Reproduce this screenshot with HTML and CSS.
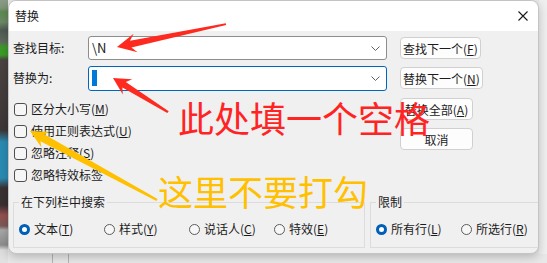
FILE: index.html
```html
<!DOCTYPE html>
<html lang="zh-CN">
<head>
    <meta charset="UTF-8">
    <meta name="viewport" content="width=device-width, initial-scale=1.0">
    <title>替换</title>
    <link rel="stylesheet" href="styles.css">
</head>
<body>
    <div class="desktop">
        <div class="wallpaper"></div>
        <div class="dialog">
            <div class="titlebar">
                <span class="title">替换</span>
                <svg class="close" width="10" height="10" viewBox="0 0 10 10">
                    <path d="M0.5 0.5 L9.5 9.5 M9.5 0.5 L0.5 9.5" stroke="#1a1a1a" stroke-width="1.1" fill="none"/>
                </svg>
            </div>
            <div class="dialog-body">
                <div class="top">
                    <div class="fields">
                        <div class="field-row">
                            <label class="field-label">查找目标:</label>
                            <div class="combo">
                                <span class="combo-text">\N</span>
                                <svg class="chevron" width="9" height="5" viewBox="0 0 9 5"><path d="M0.5 0.5 L4.5 4.5 L8.5 0.5" stroke="#606060" fill="none"/></svg>
                            </div>
                        </div>
                        <div class="field-row">
                            <label class="field-label">替换为:</label>
                            <div class="combo combo-focus">
                                <span class="selection"></span>
                                <svg class="chevron" width="9" height="5" viewBox="0 0 9 5"><path d="M0.5 0.5 L4.5 4.5 L8.5 0.5" stroke="#606060" fill="none"/></svg>
                            </div>
                        </div>
                        <ul class="options">
                            <li><span class="check"></span>区分大小写(<u>M</u>)</li>
                            <li><span class="check"></span>使用正则表达式(<u>U</u>)</li>
                            <li><span class="check"></span>忽略注释(<u>S</u>)</li>
                            <li><span class="check"></span>忽略特效标签</li>
                        </ul>
                    </div>
                    <div class="actions">
                        <button class="btn">查找下一个(<u>F</u>)</button>
                        <button class="btn">替换下一个(<u>N</u>)</button>
                        <button class="btn btn-wide">替换全部(<u>A</u>)</button>
                        <button class="btn btn-wide">取消</button>
                    </div>
                </div>
                <div class="groups">
                    <fieldset class="group group-columns">
                        <legend>在下列栏中搜索</legend>
                        <div class="radio-row">
                            <span class="radio-item"><span class="radio on"></span>文本(<u>T</u>)</span>
                            <span class="radio-item"><span class="radio"></span>样式(<u>Y</u>)</span>
                            <span class="radio-item"><span class="radio"></span>说话人(<u>C</u>)</span>
                            <span class="radio-item"><span class="radio"></span>特效(<u>E</u>)</span>
                        </div>
                    </fieldset>
                    <fieldset class="group group-limit">
                        <legend>限制</legend>
                        <div class="radio-row">
                            <span class="radio-item"><span class="radio on"></span>所有行(<u>L</u>)</span>
                            <span class="radio-item"><span class="radio"></span>所选行(<u>R</u>)</span>
                        </div>
                    </fieldset>
                </div>
            </div>
        </div>
        <div class="side"></div>
        <div class="taskrow"></div>

        <!-- annotations drawn over the screenshot -->
        <svg class="marks" width="547" height="263" viewBox="0 0 547 263">
            <polygon fill="#ff2a1f" points="225.8,23.2 130.0,40.7 133.6,33.7 117,47 137.6,52.3 131.4,47.5 226.2,25"/>
            <polygon fill="#ff2a1f" points="168.7,111.2 125.8,82.1 132.2,79.3 113,78 122.8,94.6 122.4,87.5 167.3,113"/>
            <polygon fill="#ffc000" points="157.6,199 44.2,134.2 50.1,131.7 30,131 41.5,147.5 40.4,141.2 156.4,201"/>
        </svg>
        <div class="note note-red">此处填一个空格</div>
        <div class="note note-yellow">这里不要打勾</div>
    </div>
</body>
</html>
```

FILE: styles.css
```css
* {
    padding: 0;
    margin: 0;
    box-sizing: border-box;
}
ul {
    list-style: none;
}
body {
    width: 547px;
    height: 263px;
    overflow: hidden;
    font-family: "Noto Sans CJK SC", "Microsoft YaHei", sans-serif;
    font-size: 12px;
    line-height: 16px;
    color: #1b1b1b;
    background: #e9e9e9;
}
u {
    text-decoration: underline;
    text-underline-offset: 1px;
}
.desktop {
    position: relative;
    display: grid;
    grid-template-columns: 8px 531px 8px;
    grid-template-rows: 254px 9px;
    width: 547px;
    height: 263px;
}
.wallpaper {
    grid-row: 1 / 3;
    grid-column: 1;
    background: linear-gradient(to bottom,
        #8c9a88 0, #7f9479 8px, #5d8a50 12px, #6c8a66 22px, #4f5a52 30px,
        #5e6a5e 42px, #3c9a28 47px, #3c9a28 55px, #4a4342 60px,
        #3d3636 130px, #2b8bb3 142px, #2b8bb3 178px, #3a3131 188px,
        #3a3131 205px, #93504e 215px, #7a5a58 226px, #a8a8a8 230px,
        #8d8d8d 245px, #dcdcdc 250px, #e2e2e2 263px);
}
.dialog {
    grid-row: 1;
    grid-column: 2;
    display: flex;
    flex-direction: column;
    border: 1px solid #c4c4c4;
    border-radius: 8px;
    overflow: hidden;
    background: #f0f0f0;
    box-shadow: 0 3px 10px rgba(0, 0, 0, 0.22);
    z-index: 1;
}
.side {
    grid-row: 1;
    grid-column: 3;
    background: #efefef;
}
.taskrow {
    grid-row: 2;
    grid-column: 2 / 4;
    background:
        linear-gradient(to right, transparent 44px, #b5b5b5 44px, #b5b5b5 45px, transparent 45px, transparent 60px, #b5b5b5 60px, #b5b5b5 61px, transparent 61px),
        #e8e8e8;
}
.titlebar {
    height: 30px;
    display: flex;
    align-items: center;
    justify-content: space-between;
    padding: 0 10px 0 6px;
    background: #ffffff;
}
.title {
    font-size: 12px;
    color: #1a1a1a;
}
.dialog-body {
    flex: 1;
    display: flex;
    flex-direction: column;
    padding: 5px 4px 4px 4px;
}
.top {
    display: flex;
}
.fields {
    width: 374px;
}
.field-row {
    display: flex;
    align-items: center;
    height: 24px;
    margin-bottom: 6px;
}
.field-label {
    width: 75px;
}
.combo {
    flex: 1;
    height: 24px;
    display: flex;
    align-items: center;
    justify-content: space-between;
    padding: 0 6px 0 3px;
    background: #ffffff;
    border: 1px solid #8d8d8d;
    border-radius: 3px;
}
.combo-focus {
    border-color: #0067c0;
    height: 25px;
}
.combo-text {
    font-size: 13px;
}
.selection {
    width: 5px;
    height: 16px;
    background: #0078d7;
}
.options {
    margin-top: 8px;
}
.options li {
    display: flex;
    align-items: center;
    height: 22px;
    padding-left: 1px;
}
.check {
    width: 13px;
    height: 13px;
    margin-right: 4px;
    border: 1px solid #4f4f4f;
    border-radius: 3px;
    background: #f6f6f6;
}
.actions {
    display: flex;
    flex-direction: column;
    align-items: flex-start;
    gap: 8px;
    margin-left: 13px;
    padding-top: 1px;
}
.btn {
    height: 22px;
    padding: 0 2px;
    font-family: inherit;
    font-size: 12px;
    color: #1b1b1b;
    background: #fdfdfd;
    border: 1px solid #d0d0d0;
    border-radius: 4px;
}
.btn-wide {
    min-width: 73px;
}
.actions .btn-wide:nth-child(3) {
    margin-top: 1px;
}
.groups {
    display: flex;
    gap: 5px;
    margin-top: 9px;
}
.group {
    border: 1px solid #dcdcdc;
    border-radius: 0;
    padding: 0 5px 8px 5px;
}
.group legend {
    padding: 0 2px;
    line-height: 14px;
}
.group-columns {
    width: 342px;
}
.group-limit {
    width: 174px;
}
.radio-row {
    display: flex;
    height: 20px;
    margin-top: 10px;
    align-items: center;
}
.radio-item {
    display: flex;
    align-items: center;
    width: 85px;
}
.radio {
    width: 11px;
    height: 11px;
    margin-right: 4px;
    border: 1px solid #5c5c5c;
    border-radius: 50%;
    background: #f7f7f7;
}
.radio.on {
    border: 3px solid #005fb8;
    background: #ffffff;
}
.marks {
    position: absolute;
    top: 0;
    left: 0;
    z-index: 2;
}
.note {
    position: absolute;
    z-index: 3;
    white-space: nowrap;
    font-family: "Noto Sans CJK SC", sans-serif;
    font-weight: 400;
}
.note-red {
    left: 178px;
    top: 99px;
    font-size: 36px;
    line-height: 36px;
    color: #ff2323;
}
.note-yellow {
    left: 158px;
    top: 173px;
    font-size: 35px;
    line-height: 35px;
    color: #ffc000;
}
```
